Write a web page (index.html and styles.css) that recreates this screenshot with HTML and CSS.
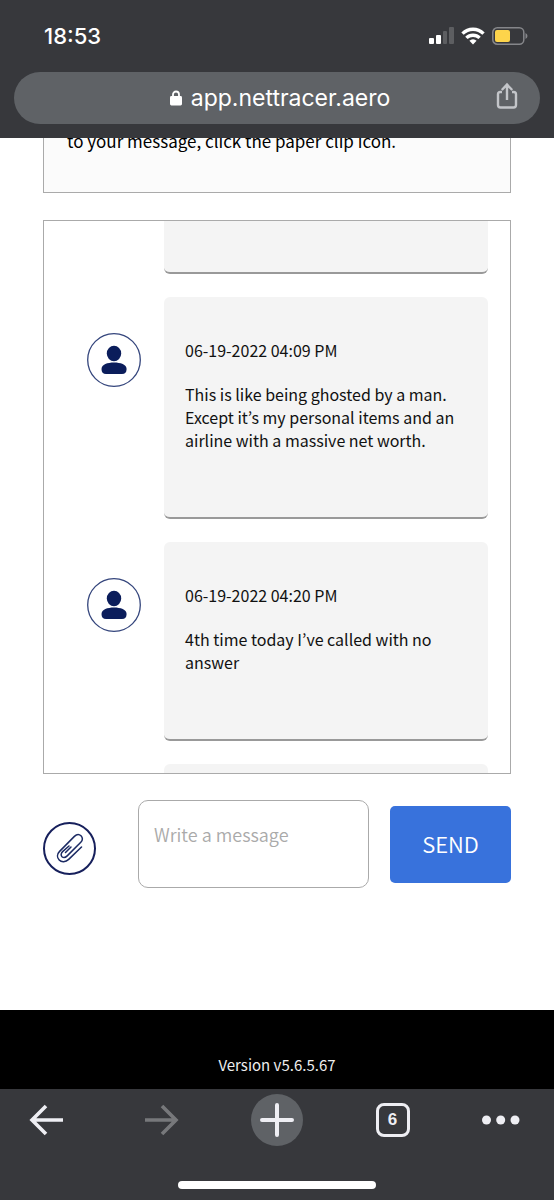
FILE: index.html
```html
<!DOCTYPE html>
<html lang="en">
<head>
<meta charset="utf-8">
<meta name="viewport" content="width=device-width, initial-scale=1">
<title>NetTracer messages</title>
<link rel="stylesheet" href="styles.css">
</head>
<body>
<header class="browser-top">
  <div class="status">
    <span class="clock">18:53</span>
    <div class="indicators">
      <svg width="26" height="18" viewBox="0 0 26 18" aria-hidden="true">
        <rect x="1" y="11" width="5" height="6" rx="1" fill="#fff"/>
        <rect x="8" y="8" width="5" height="9" rx="1" fill="#fff"/>
        <rect x="15" y="4" width="4" height="13" rx="1" fill="#5d5e61"/>
        <rect x="21" y="0" width="5" height="17" rx="1" fill="#5d5e61"/>
      </svg>
      <svg width="24" height="18" viewBox="0 0 24 18" aria-hidden="true" fill="none" stroke="#fff" stroke-width="3.400">
        <path d="M1.500 6.600a15 15 0 0 1 21 0"/>
        <path d="M5.400 10.900a9.400 9.400 0 0 1 13.200 0"/>
        <path d="M12 17.400l-3.600-3.600a5 5 0 0 1 7.200 0z" fill="#fff" stroke="none"/>
      </svg>
      <svg width="36" height="18" viewBox="0 0 36 18" aria-hidden="true">
        <rect x=".8" y=".8" width="31" height="16.4" rx="4.5" fill="none" stroke="#85868a" stroke-width="1.5"/>
        <rect x="3" y="3" width="15" height="12" rx="2" fill="#fdd44b"/>
        <path d="M33.5 6v6q2-1 2-3t-2-3z" fill="#85868a"/>
      </svg>
    </div>
  </div>
  <div class="address">
    <svg class="lock" width="12" height="16" viewBox="0 0 12 16" aria-hidden="true">
      <path d="M3 7V4.500a3 3 0 0 1 6 0V7" fill="none" stroke="#fff" stroke-width="1.800"/>
      <rect x="0" y="6" width="12" height="9.500" rx="1.400" fill="#fff"/>
    </svg>
    <span>app.nettracer.aero</span>
    <button class="share" aria-label="Share">
      <svg width="22" height="28" viewBox="0 0 22 28" fill="none" stroke="#c3c5c9" stroke-width="2.400">
        <path d="M6 10H4.200Q2 10 2 12.200V23q0 2.500 2.500 2.500h13Q20 25.500 20 23V12.200Q20 10 17.800 10H16"/>
        <path d="M11 18V3M5.800 8L11 2.600 16.200 8"/>
      </svg>
    </button>
  </div>
</header>

<main class="viewport">
  <div class="content">
    <section class="notice"><p>to your message, click the paper clip icon.</p></section>
    <section class="log" aria-label="Messages">
      <article class="message"><div class="bubble bubble-tail"></div></article>
      <article class="message">
        <svg class="avatar" viewBox="0 0 54 54" aria-hidden="true">
          <circle cx="27" cy="27" r="26.300" fill="#fff" stroke="#34457c" stroke-width="1.300"/>
          <ellipse cx="27" cy="20.500" rx="7.200" ry="7.800" fill="#0b1d5b"/>
          <path d="M14.500 36c0-4.500 6-6.500 12.500-6.500S39.600 31.500 39.600 36c0 3.500-1.600 5-4.600 5H19c-3 0-4.500-1.500-4.500-5z" fill="#0b1d5b"/>
        </svg>
        <div class="bubble">
          <time>06-19-2022 04:09 PM</time>
          <p>This is like being ghosted by a man. Except it’s my personal items and an airline with a massive net worth.</p>
        </div>
      </article>
      <article class="message">
        <svg class="avatar" viewBox="0 0 54 54" aria-hidden="true">
          <circle cx="27" cy="27" r="26.300" fill="#fff" stroke="#34457c" stroke-width="1.300"/>
          <ellipse cx="27" cy="20.500" rx="7.200" ry="7.800" fill="#0b1d5b"/>
          <path d="M14.500 36c0-4.500 6-6.500 12.500-6.500S39.600 31.500 39.600 36c0 3.500-1.600 5-4.600 5H19c-3 0-4.500-1.500-4.500-5z" fill="#0b1d5b"/>
        </svg>
        <div class="bubble">
          <time>06-19-2022 04:20 PM</time>
          <p>4th time today I’ve called with no answer</p>
        </div>
      </article>
      <article class="message"><div class="bubble bubble-head"></div></article>
    </section>
    <form class="composer">
      <button type="button" class="attach" aria-label="Attach a file">
        <svg width="28" height="30" viewBox="0 0 28 30" fill="none" stroke="#1b2a63" stroke-width="1.500" stroke-linecap="round">
          <path d="M25.500 14L12.700 26.400C9.600 29.400 5.400 29.400 3.200 27 .8 24.500 1 21 3.600 18.400L18.400 3.400C20.600 1.200 23.300 1.200 25 2.800c1.800 1.700 1.900 4.400-.2 6.500L11.200 22.900c-1.800 1.800-3.900 2-5.200.8-1.300-1.300-1.100-3.400.6-5.100L13 13"/>
          <path d="M9.500 19.500L15 14"/>
        </svg>
      </button>
      <textarea class="entry" aria-label="Message" placeholder="Write a message"></textarea>
      <button type="button" class="send">SEND</button>
    </form>
  </div>
  <footer class="version">Version v5.6.5.67</footer>
</main>

<footer class="browser-bottom">
  <nav class="tools" aria-label="Browser">
    <button class="tool" aria-label="Back">
      <svg width="34" height="32" viewBox="0 0 34 32" fill="none" stroke="#eeeef3" stroke-width="3.600"><path d="M34 16H3M17 2L3 16l14 14"/></svg>
    </button>
    <button class="tool" aria-label="Forward">
      <svg width="34" height="32" viewBox="0 0 34 32" fill="none" stroke="#77787b" stroke-width="3.600"><path d="M0 16h31M17 2l14 14-14 14"/></svg>
    </button>
    <button class="tool new-tab" aria-label="New tab">
      <svg width="34" height="34" viewBox="0 0 34 34" fill="none" stroke="#eeeef3" stroke-width="4" stroke-linecap="round"><path d="M2 17h30M17 2v30"/></svg>
    </button>
    <button class="tool" aria-label="6 open tabs"><span class="tabs">6</span></button>
    <button class="tool more" aria-label="More">
      <svg width="38" height="10" viewBox="0 0 38 10" fill="#eeeef3"><circle cx="4.500" cy="5" r="4.500"/><circle cx="18.700" cy="5" r="4.500"/><circle cx="33" cy="5" r="4.500"/></svg>
    </button>
  </nav>
  <div class="home-bar"></div>
</footer>
</body>
</html>
```
FILE: styles.css
```css
* { box-sizing: border-box; }

body {
  margin: 0;
  min-height: 100vh;
  display: flex;
  flex-direction: column;
  background: #fff;
  color: #111;
  font-family: "Noto Sans CJK KR", "Noto Sans", sans-serif;
  font-size: 16px;
  line-height: 23px;
}

p { margin: 0; }

svg { display: block; flex: none; }

button {
  border: 0;
  padding: 0;
  background: none;
  color: inherit;
  font: inherit;
}

.browser-top {
  background: #37383c;
  padding: 0 14px 14px;
  color: #fff;
  font-family: Inter, sans-serif;
}

.status {
  height: 72px;
  padding: 0 12px 0 30px;
  display: flex;
  align-items: center;
  justify-content: space-between;
}

.clock {
  font-size: 22px;
  font-weight: 500;
}

.indicators {
  display: flex;
  align-items: center;
  gap: 7px;
}

.address {
  position: relative;
  height: 52px;
  padding-left: 6px;
  border-radius: 26px;
  background: #5f6266;
  display: flex;
  align-items: center;
  justify-content: center;
  gap: 9px;
  font-size: 23px;
}

.share {
  position: absolute;
  right: 22px;
  top: 10px;
}

.viewport {
  flex: 1;
  display: flex;
  flex-direction: column;
}

.content {
  flex: 1;
  padding: 0 43px 122px;
}

.notice {
  height: 55px;
  padding: 0 23px 40px;
  border: solid #aaa;
  border-width: 0 1px 1px;
  background: #fbfbfb;
  display: flex;
  flex-direction: column;
  justify-content: flex-end;
  overflow: hidden;
  color: #000;
  font-size: 17px;
}

.log {
  height: 554px;
  margin: 27px 0 26px;
  padding: 0 22px 0 43px;
  border: 1px solid #aaa;
  display: flex;
  flex-direction: column;
  gap: 23px;
  overflow: hidden;
}

.message {
  flex: none;
  display: grid;
  grid-template-columns: 54px 1fr;
  column-gap: 23px;
  align-items: start;
}

.avatar {
  width: 54px;
  margin-top: 36px;
}

.bubble {
  grid-column: 2;
  padding: 42px 21px 65px;
  border-radius: 6px;
  border-bottom: 2px solid #999;
  background: #f4f4f4;
}

.bubble time {
  display: block;
  margin-bottom: 21px;
}

.bubble-tail {
  padding: 51px 0 0;
  border-top-left-radius: 0;
  border-top-right-radius: 0;
}

.composer {
  display: grid;
  grid-template-columns: 53px 1fr 121px;
  align-items: center;
}

.attach {
  height: 53px;
  margin-top: 8px;
  border: 2px solid #17205c;
  border-radius: 50%;
  display: grid;
  place-items: center;
}

.entry {
  height: 88px;
  margin: 0 21px 0 42px;
  padding: 19px 15px;
  border: 1px solid #aaa;
  border-radius: 10px;
  background: #fff;
  font: inherit;
  font-size: 18px;
  font-weight: 350;
  line-height: 28px;
  resize: none;
  overflow: hidden;
}

.entry::placeholder { color: #aaa; }

.send {
  height: 77px;
  padding-bottom: 2px;
  border-radius: 5px;
  background: #3872dc;
  color: #fff;
  font-size: 22px;
  font-weight: 350;
}

.version {
  height: 79px;
  padding-top: 43px;
  background: #000;
  color: #eee;
  font-size: 15px;
  text-align: center;
}

.browser-bottom {
  height: 111px;
  background: #37383c;
  padding-top: 5px;
}

.tools {
  padding: 0 20px;
  display: flex;
  justify-content: space-between;
}

.tool {
  width: 52px;
  height: 52px;
  display: flex;
  align-items: center;
  justify-content: center;
}

.new-tab {
  border-radius: 50%;
  background: #5f6266;
}

.tabs {
  width: 34px;
  height: 34px;
  border: 3px solid #eeeef3;
  border-radius: 8px;
  color: #eeeef3;
  font: 700 17px/28px "Liberation Sans", sans-serif;
}

.more { justify-content: flex-start; }

.home-bar {
  width: 198px;
  height: 8px;
  margin: 35px auto 0;
  border-radius: 4px;
  background: #fff;
}
```
